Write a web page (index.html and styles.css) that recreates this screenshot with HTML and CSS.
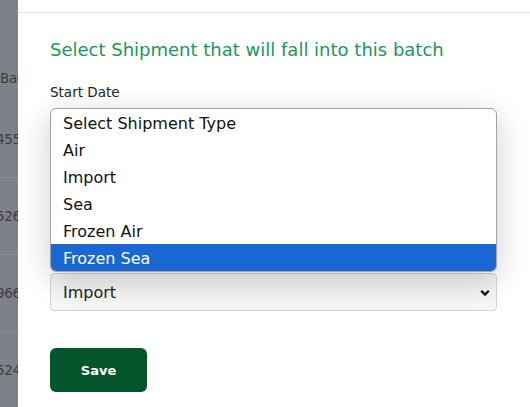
FILE: index.html
```html
<!DOCTYPE html>
<html>
<head>
<meta charset="utf-8">
<link rel="stylesheet" href="styles.css">
</head>
<body>
<div class="page">
  <div class="backdrop">
    <div class="bd-row bd-head"><span class="bd-text">Bat</span></div>
    <div class="bd-row"><span class="bd-text bd-num">455</span></div>
    <div class="bd-row"><span class="bd-text bd-num">526</span></div>
    <div class="bd-row"><span class="bd-text bd-num">966</span></div>
    <div class="bd-row bd-last"><span class="bd-text bd-num">524</span></div>
  </div>
  <div class="modal">
    <div class="modal-top"></div>
    <div class="modal-body">
      <h2 class="title">Select Shipment that will fall into this batch</h2>
      <div class="label">Start Date</div>
      <div class="field">
        <ul class="listbox">
          <li class="opt">Select Shipment Type</li>
          <li class="opt">Air</li>
          <li class="opt">Import</li>
          <li class="opt">Sea</li>
          <li class="opt">Frozen Air</li>
          <li class="opt opt-sel">Frozen Sea</li>
        </ul>
        <div class="select">
          <span>Import</span>
          <svg class="chev" width="10" height="8" viewBox="0 0 10 8"><path d="M1.2 1.8 L5 5.6 L8.8 1.8" fill="none" stroke="#111" stroke-width="2.2"/></svg>
        </div>
      </div>
      <button class="save">Save</button>
    </div>
  </div>
</div>
</body>
</html>
```
FILE: styles.css
```css
* { box-sizing: border-box; }
html, body { margin: 0; padding: 0; }
body {
  font-family: "DejaVu Sans", "Open Sans", sans-serif;
  background: #fff;
}
.page {
  display: flex;
  height: 407px;
  overflow: hidden;
}
.backdrop {
  width: 18px;
  flex: none;
  background: #7e8188;
  overflow: hidden;
  padding-top: 55px;
}
.bd-row {
  height: 77px;
  display: flex;
  align-items: center;
  border-bottom: 1px solid #888b91;
  white-space: nowrap;
  font-size: 13.5px;
  letter-spacing: -0.3px;
  color: #3b3d42;
}
.bd-head { height: 46px; border-bottom: none; }
.bd-text { display: block; }
.bd-num { margin-left: -4px; }
.modal {
  flex: 1;
  background: #fff;
}
.modal-top {
  height: 13px;
  border-bottom: 1px solid #e6e6e6;
}
.modal-body {
  padding: 26px 33px 0 32px;
}
.title {
  margin: 0;
  font-size: 18px;
  line-height: 22px;
  font-weight: 400;
  color: #17985d;
}
.label {
  margin-top: 21px;
  font-size: 13.5px;
  line-height: 20px;
  font-weight: 500;
  color: #222;
}
.field {
  margin-top: 6px;
  display: flex;
  flex-direction: column;
}
.listbox {
  list-style: none;
  margin: 0;
  padding: 0;
  border: 1px solid #a3a3a3;
  border-radius: 6px;
  overflow: hidden;
  background: #fff;
  position: relative;
  z-index: 2;
  box-shadow: 0 8px 32px rgba(0, 0, 0, 0.2);
}
.opt {
  height: 27px;
  line-height: 24px;
  padding-top: 3px;
  padding-left: 12px;
  font-size: 16px;
  color: #111;
}
.opt-sel {
  background: #1967d2;
  color: #fff;
}
.select {
  margin-top: 1px;
  height: 38px;
  border: 1px solid #d4d4d4;
  border-radius: 4px;
  background: linear-gradient(#f2f2f2, #f7f7f7);
  display: flex;
  align-items: center;
  justify-content: space-between;
  padding: 1px 6px 0 12px;
  font-size: 16px;
  color: #222;
}
.chev { display: block; }
.save {
  margin-top: 37px;
  width: 97px;
  height: 44px;
  border: none;
  border-radius: 6px;
  background: #05552c;
  color: #fff;
  font-family: inherit;
  font-size: 13px;
  font-weight: 700;
}
```
